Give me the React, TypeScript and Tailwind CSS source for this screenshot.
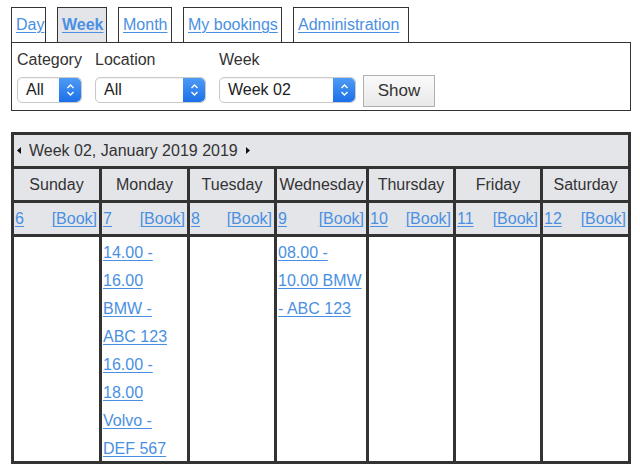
import React from "react";

const link = "text-[#4a90e2] underline decoration-1 underline-offset-2";

const days = [
  { name: "Sunday", date: "6" },
  { name: "Monday", date: "7" },
  { name: "Tuesday", date: "8" },
  { name: "Wednesday", date: "9" },
  { name: "Thursday", date: "10" },
  { name: "Friday", date: "11" },
  { name: "Saturday", date: "12" },
];

const bookings: Record<string, string[][]> = {
  Monday: [
    ["14.00 -", "16.00", "BMW -", "ABC 123"],
    ["16.00 -", "18.00", "Volvo -", "DEF 567"],
  ],
  Wednesday: [["08.00 -", "10.00 BMW", "- ABC 123"]],
};

function Stepper() {
  return (
    <div className="flex h-full w-[22px] items-center justify-center rounded-r-[5px] bg-gradient-to-b from-[#4d9bf5] to-[#1b6fe9]">
      <svg width="9" height="14" viewBox="0 0 9 14" fill="none">
        <path d="M1.5 5 L4.5 2 L7.5 5" stroke="white" strokeWidth="1.4" />
        <path d="M1.5 9 L4.5 12 L7.5 9" stroke="white" strokeWidth="1.4" />
      </svg>
    </div>
  );
}

function Select({ value, width }: { value: string; width: string }) {
  return (
    <div
      className={`mt-[5px] flex h-[26px] items-center rounded-[5px] border border-[#c9c9c9] bg-white shadow-[inset_0_1px_1px_rgba(0,0,0,0.06)] ${width}`}
    >
      <span className="flex-1 pl-[8px] leading-[24px] text-[#222]">{value}</span>
      <Stepper />
    </div>
  );
}

function Tab({
  label,
  width,
  active,
}: {
  label: string;
  width: string;
  active?: boolean;
}) {
  return (
    <div
      className={`flex h-[35px] items-center border border-b-0 border-[#333] pl-[4px] ${width} ${
        active ? "bg-[#e4e5e9] font-bold" : "bg-white"
      }`}
    >
      <a href="#" className={link}>
        {label}
      </a>
    </div>
  );
}

export default function App() {
  return (
    <div className="min-h-screen bg-white pl-[11px] pt-[7px] font-['Liberation_Sans',Arial,sans-serif] text-[16px] text-[#333]">
      {/* TABS */}
      <div className="flex gap-[11px]">
        <Tab label="Day" width="w-[35px]" />
        <Tab label="Week" width="w-[50px]" active />
        <Tab label="Month" width="w-[54px]" />
        <Tab label="My bookings" width="w-[99px]" />
        <Tab label="Administration" width="w-[116px]" />
      </div>

      {/* FILTERS */}
      <div className="flex h-[69px] w-[620px] items-start border border-[#333] pl-[5px] pt-[5px]">
        <div className="mr-[13px] flex flex-col">
          <span className="h-[24px] leading-[24px]">Category</span>
          <Select value="All" width="w-[65px]" />
        </div>
        <div className="mr-[13px] flex flex-col">
          <span className="h-[24px] leading-[24px]">Location</span>
          <Select value="All" width="w-[111px]" />
        </div>
        <div className="mr-[7px] flex flex-col">
          <span className="h-[24px] leading-[24px]">Week</span>
          <Select value="Week 02" width="w-[137px]" />
        </div>
        <button className="mt-[27px] h-[32px] w-[72px] border border-[#b0b0b0] bg-gradient-to-b from-[#fafafa] to-[#e9e9e9] text-[17px] text-[#333]">
          Show
        </button>
      </div>

      {/* CALENDAR */}
      <div className="mt-[21px] grid w-[620px] grid-cols-[85px_85px_84px_89px_84px_84px_85px] gap-[3px] bg-[#333] p-[3px]">
        <div className="col-span-7 flex h-[31px] items-center gap-[8px] bg-[#e4e5e9] pl-[3px]">
          <svg width="4" height="7" viewBox="0 0 4 7">
            <polygon points="4,0 0,3.5 4,7" fill="#111" />
          </svg>
          <span>Week 02, January 2019 2019</span>
          <svg width="4" height="7" viewBox="0 0 4 7">
            <polygon points="0,0 4,3.5 0,7" fill="#111" />
          </svg>
        </div>

        {days.map((d) => (
          <div
            key={d.name}
            className="flex h-[31px] items-center justify-center bg-[#e4e5e9]"
          >
            {d.name}
          </div>
        ))}

        {days.map((d) => (
          <div
            key={d.date}
            className="flex h-[31px] items-center justify-between bg-[#e4e5e9] pl-[1px] pr-[2px]"
          >
            <a href="#" className={link}>
              {d.date}
            </a>
            <a href="#" className={link}>
              [Book]
            </a>
          </div>
        ))}

        {days.map((d) => (
          <div
            key={d.name + "-cell"}
            className="h-[224px] whitespace-nowrap bg-white pl-[1px] pt-[2px] leading-[28px]"
          >
            {(bookings[d.name] ?? []).map((lines, i) => (
              <a key={i} href="#" className={`${link} block`}>
                {lines.map((l, j) => (
                  <React.Fragment key={j}>
                    {l}
                    {j < lines.length - 1 && <br />}
                  </React.Fragment>
                ))}
              </a>
            ))}
          </div>
        ))}
      </div>
    </div>
  );
}
